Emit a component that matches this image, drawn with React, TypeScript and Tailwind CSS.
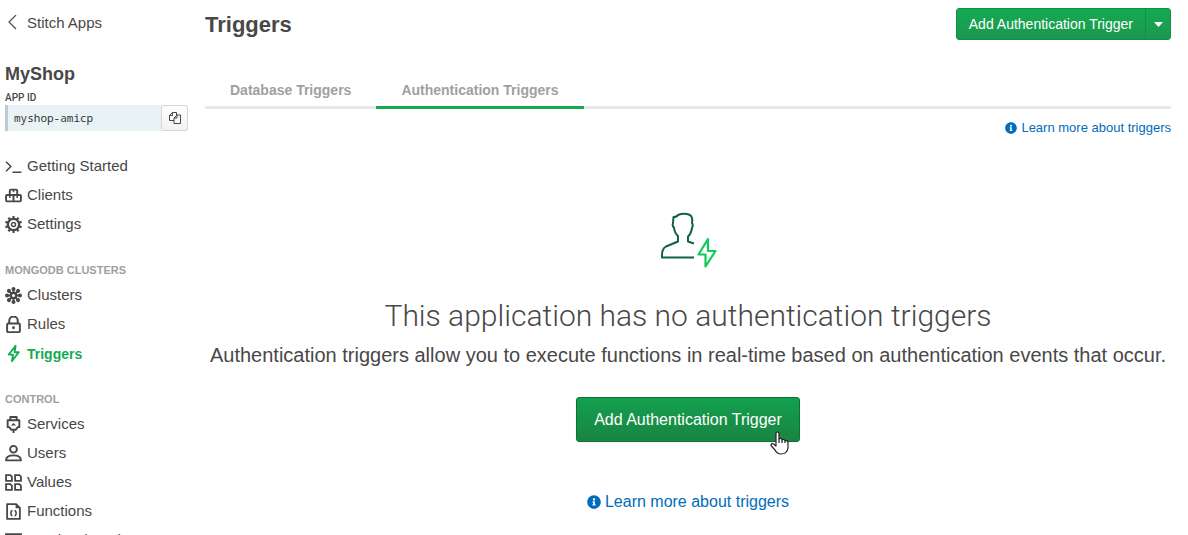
import type { ReactNode } from "react";
import { FaInfoCircle } from "react-icons/fa";

const stroke = { fill: "none", stroke: "currentColor", strokeWidth: 2 } as const;

const Svg = ({ children }: { children: ReactNode }) => (
  <svg className="size-[17px] shrink-0" viewBox="0 0 16 16" aria-hidden="true" {...stroke}>{children}</svg>
);

const teeth = [0, 36, 72, 108, 144, 180, 216, 252, 288, 324];
const spokes = [0, 45, 90, 135, 180, 225, 270, 315];

const icons: Record<string, ReactNode> = {
  "Getting Started": <Svg><path strokeWidth="1.4" d="M1 3.5 5.5 8 1 12.500M7 13.300H15.500" /></Svg>,
  Clients: (
    <Svg>
      <path strokeWidth="1.8" strokeLinejoin="round" d="M4.500 7.500V3.500Q4.500 2.500 5.500 2.500H10.500Q11.500 2.500 11.500 3.500V7.500M2 7.500H14Q15 7.500 15 8.500V12.500Q15 13.500 14 13.500H2Q1 13.500 1 12.500V8.500Q1 7.500 2 7.500ZM8 7.500V13.500" />
      <path strokeWidth="1.4" d="M8 2.500V5M4.500 8V10.300M11.500 8V10.300" />
    </Svg>
  ),
  Settings: (
    <Svg>
      <circle cx="8" cy="8" r="5.300" strokeWidth="2.200" />
      <circle cx="8" cy="8" r="1.900" strokeWidth="1.400" />
      {teeth.map((a) => <path key={a} d="M8 3V0" strokeWidth="2" transform={`rotate(${a} 8 8)`} />)}
    </Svg>
  ),
  Clusters: (
    <Svg>
      <circle cx="8" cy="8" r="2.500" strokeWidth="2" />
      {spokes.map((a) => (
        <g key={a} transform={`rotate(${a} 8 8)`}>
          <path d="M8 6V2" strokeWidth="1.900" />
          <circle cx="8" cy="1.900" r="1.900" fill="currentColor" stroke="none" />
        </g>
      ))}
    </Svg>
  ),
  Rules: (
    <Svg>
      <rect x="2" y="7" width="12" height="8.200" rx="1" strokeWidth="1.800" />
      <path strokeWidth="1.900" d="M4 7V4.500A4 4 0 0 1 12 4.500V7" />
      <circle cx="8" cy="11" r="1.400" fill="currentColor" stroke="none" />
    </Svg>
  ),
  Triggers: <Svg><path strokeWidth="1.700" strokeLinejoin="round" d="M10 .800 3.500 9H7.500L6.500 15.200 13 6.800H9Z" /></Svg>,
  Services: (
    <Svg>
      <path strokeWidth="1.800" strokeLinejoin="round" d="M5 4V1H11V4M2.500 4H13.500V10.500H12L10 13H6L4 10.500H2.500ZM8 13V16" />
      <path d="M5.500 9 8 6.500 10.500 9Z" fill="currentColor" stroke="none" />
    </Svg>
  ),
  Users: (
    <Svg>
      <circle cx="8" cy="4" r="3.200" strokeWidth="1.800" />
      <path strokeWidth="1.800" strokeLinejoin="round" d="M1 14.500C1 11.500 4 9.800 8 9.800S15 11.500 15 14.500Z" />
    </Svg>
  ),
  Values: (
    <Svg><path strokeWidth="1.700" d="M1 1H5L6.500 2.500V6.500H1ZM9.500 1H13.500L15 2.500V6.500H9.500ZM1 9.500H5L6.500 11V15H1ZM9.500 9.500H13.500L15 11V15H9.500Z" /></Svg>
  ),
  Functions: (
    <Svg>
      <path strokeWidth="1.700" strokeLinejoin="round" d="M2 1H10.500L14 4.500V15H2Z" />
      <path d="M10 1V5H14Z" fill="currentColor" stroke="none" />
      <path strokeWidth="1.500" d="M7 7Q5.800 7 5.800 8.200 5.800 9.500 4.800 9.500 5.800 9.500 5.800 10.800 5.800 12 7 12M9 7Q10.200 7 10.200 8.200 10.200 9.500 11.200 9.500 10.200 9.500 10.200 10.800 10.200 12 9 12" />
    </Svg>
  ),
  "Hosting (Beta)": <Svg><path strokeWidth="1.700" d="M0 2H16V14H1V2M10 5H13" /></Svg>,
};

const groups = [
  { title: "", items: ["Getting Started", "Clients", "Settings"] },
  { title: "MONGODB CLUSTERS", items: ["Clusters", "Rules", "Triggers"] },
  { title: "CONTROL", items: ["Services", "Users", "Values", "Functions", "Hosting (Beta)"] },
];

function Sidebar() {
  return (
    <aside className="w-[205px] shrink-0 pl-[5px]">
      <a href="#apps" className="mt-3 flex h-[22px] items-center gap-1.5 text-[15px]">
        <svg className="size-4" viewBox="0 0 16 16" fill="none" stroke="currentColor" strokeWidth="1.200" aria-hidden="true"><path d="M11 0 4 7 11 14" /></svg>
        Stitch Apps
      </a>
      <h2 className="mt-7 text-lg leading-6 font-bold">MyShop</h2>
      <p className="mt-1 font-['Roboto','Liberation_Sans',sans-serif] text-[10px] leading-[15px] font-medium">APP ID</p>
      <div className="flex h-[26px] w-[183px] border-l-3 border-[#b9cdd3] bg-[#e9f3f6]">
        <code className="flex-1 pl-1.5 font-['Noto_Sans_Mono','DejaVu_Sans_Mono',monospace] text-[11px] leading-[26px] text-[#333]">myshop-amicp</code>
        <button aria-label="Copy app ID" className="flex w-[27px] items-center justify-center rounded-[3px] border border-[#d5d5d5] bg-linear-to-b from-white to-[#f3f3f3]">
          <svg className="size-3" viewBox="0 0 12 12" fill="none" stroke="currentColor" aria-hidden="true">
            <path d="M5 8.500H.5V3.500L3.500.5H7.500V3M3.500.5V3.500H.5M5 11.500V6L8 3H11.500V11.500ZM8 3V6H5" />
          </svg>
        </button>
      </div>
      <nav className="mt-[21px]">
        {groups.map((g) => (
          <section key={g.title} className="mb-6">
            {g.title && <h3 className="mb-[3px] text-[11px] leading-[15px] font-bold text-[#a09f9f]">{g.title}</h3>}
            <ul>
              {g.items.map((item) => (
                <li key={item}>
                  <a href="#item" className={item === "Triggers" ? "flex h-[29px] items-center gap-[5px] text-sm font-bold text-[#13aa52]" : "flex h-[29px] items-center gap-[5px] text-[15px]"}>
                    {icons[item]}{item}
                  </a>
                </li>
              ))}
            </ul>
          </section>
        ))}
      </nav>
    </aside>
  );
}

export default function App() {
  return (
    <div className="flex h-screen overflow-hidden bg-white font-['Liberation_Sans',Arial,sans-serif] text-[#494747]">
      <Sidebar />
      <main className="min-w-0 flex-1 pr-[17px]">
        <header className="flex items-start justify-between pt-2">
          <h1 className="text-[22px] leading-[34px] font-bold">Triggers</h1>
          <div className="flex h-8 rounded-[3px] border border-[#118d4d] bg-linear-to-b from-[#13aa52] to-[#1c974e] text-white">
            <button className="px-3 text-sm">Add Authentication Trigger</button>
            <button aria-label="More trigger types" className="flex w-[25px] items-center justify-center border-l border-[#118d4d]">
              <svg className="h-[5px] w-[9px]" viewBox="0 0 9 5" fill="currentColor" aria-hidden="true"><path d="M0 0H9L4.500 5Z" /></svg>
            </button>
          </div>
        </header>
        <div role="tablist" className="mt-[29px] flex h-[38px] border-b-3 border-[#e8e8e8] text-sm font-bold text-[#a09f9f]">
          <button role="tab" aria-selected="false" className="h-[38px] border-b-3 border-transparent px-[25px] pt-0.5">Database Triggers</button>
          <button role="tab" aria-selected="true" className="h-[38px] border-b-3 border-[#13aa52] px-[25px] pt-0.5">Authentication Triggers</button>
        </div>
        <div className="mt-2.5 flex justify-end text-[13px] leading-[18px] text-[#006cbc]">
          <a href="#docs" className="flex items-center gap-1"><FaInfoCircle className="size-3" />Learn more about triggers</a>
        </div>
        <section className="flex flex-col items-center text-center">
          <svg className="mt-[71px] h-[64px] w-[64px]" viewBox="656 208 64 64" fill="none" strokeWidth="2" strokeLinejoin="round" aria-hidden="true">
            <path stroke="#116149" d="M694 257.500H662Q661.500 249 666 246.500L678 241.500V236Q674.500 233 674 227.500Q672 226 673 223L673.500 217Q677 217 678 215Q684 212.500 690 215Q693 217 692 223Q693.500 225 692 228Q691 234 688 236.500V241.500L694 243.500" />
            <path stroke="#13c95b" strokeWidth="2.200" d="M708 239 698.500 254.500H705.500V266.500L715.500 251H708Z" />
          </svg>
          <h2 className="mt-6 font-['Roboto','Liberation_Sans',sans-serif] text-[30px] leading-10 font-light">This application has no authentication triggers</h2>
          <p className="mt-[5px] text-xl leading-7">Authentication triggers allow you to execute functions in real-time based on authentication events that occur.</p>
          <button className="relative mt-7 h-[45px] rounded-[3px] border border-[#0d7038] bg-linear-to-b from-[#13a04d] to-[#198444] px-[17px] text-base text-white shadow-xs">
            Add Authentication Trigger
            <svg className="absolute right-2.5 -bottom-3.5 h-6 w-[19px]" viewBox="0 0 19 24" fill="white" stroke="#222" strokeWidth="1.200" strokeLinejoin="round" aria-hidden="true">
              <path d="M6 15V2.500Q6 1 7.500 1T9 2.500V8Q11.500 6.500 12 9Q14.500 7.500 15 10Q18 9 18 11.500V17Q17 23 11 23Q7 23 5 19L1 14.500Q1 12 3.500 13Z" />
              <path fill="none" d="M9 8V12M12 9V12M15 10V12" />
            </svg>
          </button>
          <a href="#docs" className="mt-12 flex items-center gap-1 text-base leading-6 text-[#006cbc]"><FaInfoCircle className="size-3.5" />Learn more about triggers</a>
        </section>
      </main>
    </div>
  );
}
